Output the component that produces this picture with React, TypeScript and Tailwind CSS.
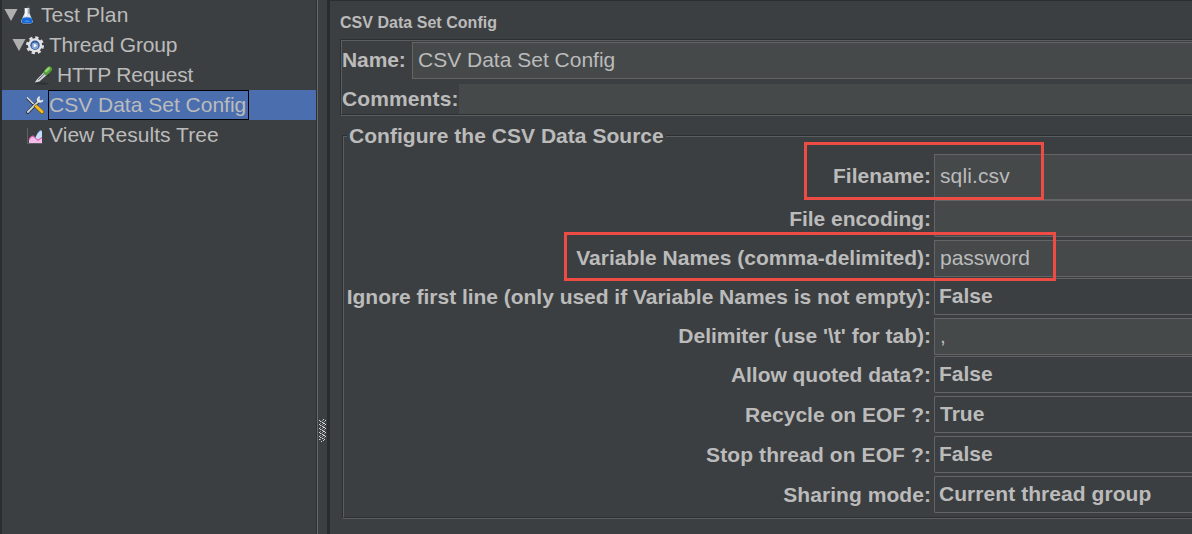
import React from "react";

const FlaskIcon = () => (
  <svg width="14" height="20" viewBox="0 0 14 20">
    <ellipse cx="7" cy="18" rx="6.5" ry="1.6" fill="#25282a" opacity="0.6" />
    <path d="M4.6 3 L4.6 8 L1.2 15.8 Q0.6 18 3 18.4 L11 18.4 Q13.4 18 12.6 15.8 L9.4 8 L9.4 3 Z" fill="#dbe3ea" />
    <path d="M2.6 13 Q7 11.6 11.4 13 L12.5 16 Q13.1 18.1 11 18.3 L3 18.3 Q0.9 18.1 1.5 16 Z" fill="#1668d8" />
    <path d="M4 16.8 Q7 14.4 10 16.8 Z" fill="#4f9cf0" />
    <path d="M6 3.4 L6 11" stroke="#ffffff" strokeWidth="1.4" />
    <path d="M8.4 4 L8.4 9" stroke="#9fabb5" strokeWidth="1" />
    <path d="M7.6 3 L9.4 0.8" stroke="#5e6468" strokeWidth="1.2" />
  </svg>
);

const GearIcon = () => (
  <svg width="18" height="20" viewBox="0 0 18 20">
    <circle cx="9" cy="10.3" r="7.6" fill="none" stroke="#dcdddf" strokeWidth="2.8" strokeDasharray="3.2 2.77" />
    <circle cx="9" cy="10.3" r="7" fill="#e4e4e6" />
    <circle cx="9" cy="10.3" r="4.7" fill="#345796" />
    <circle cx="9" cy="10.8" r="3.4" fill="#86a9dc" />
    <path d="M7.8 8.4 L11 10.5 L7.8 12.6 Z" fill="#ffffff" />
  </svg>
);

const DropperIcon = () => (
  <svg width="20" height="20" viewBox="0 0 20 20">
    <ellipse cx="8" cy="18.6" rx="7" ry="1" fill="#26292b" opacity="0.7" />
    <path d="M0.8 17.6 L2.8 14.4 L10 7 L13 9.8 L5.4 16.4 Z" fill="#d3d6d8" />
    <path d="M4.4 14.8 L10.8 8.4" stroke="#5b6063" strokeWidth="1" />
    <path d="M9.4 5.6 L14.4 10.4" stroke="#26321f" strokeWidth="1.8" strokeLinecap="round" />
    <path d="M12.2 7.4 L15.4 4.2" stroke="#549f3c" strokeWidth="5.4" strokeLinecap="round" />
    <path d="M12 6.2 L14.8 3.4" stroke="#96d474" strokeWidth="2.4" strokeLinecap="round" />
  </svg>
);

const ToolsIcon = () => (
  <svg width="18" height="20" viewBox="0 0 18 20">
    <path d="M1 3 L9.4 11.4" stroke="#202326" strokeWidth="2.4" />
    <path d="M1 2.4 L10 11.4" stroke="#d4d6d8" strokeWidth="1.5" />
    <path d="M1.6 17.4 L12 7" stroke="#272b30" strokeWidth="3.2" strokeLinecap="round" />
    <path d="M1.8 17 L12.2 6.6" stroke="#cfd2d4" strokeWidth="2" strokeLinecap="round" />
    <path d="M12.4 1.6 Q10 4 11 6.6 Q13.8 9.2 17 6.4 L17.4 4.4 L15 5.4 L13.4 4.2 L14.2 1.6 Z" fill="#e2e3e4" />
    <path d="M10.4 11.6 L16 17" stroke="#7c5908" strokeWidth="4" strokeLinecap="round" />
    <path d="M10.4 11.4 L16 16.8" stroke="#f5bd22" strokeWidth="2.8" strokeLinecap="round" />
  </svg>
);

const ChartIcon = () => (
  <svg width="18" height="20" viewBox="0 0 18 20">
    <path d="M1.5 3 V18.5 H16.5" fill="none" stroke="#5d6164" strokeWidth="1" />
    <path d="M8 15 L11.5 8.5 L14 5.4 L16 6 V18 H8 Z" fill="#c4e0f8" />
    <path d="M11.5 8.5 L14 5.6 L15.6 6" fill="none" stroke="#6fa6da" strokeWidth="1" />
    <path d="M3 18 V14.6 L5 12 L7 11 L10 13.6 L12 15.2 L16 12.5 V18 Z" fill="#f3bce9" />
    <path d="M3 14.6 L5 12 L7 11 L10 13.6 L12 15.2 L16 12.5" fill="none" stroke="#dc62ae" strokeWidth="1.1" />
  </svg>
);

const Expander = () => (
  <svg width="14" height="12" viewBox="0 0 14 12">
    <path d="M0.5 0 H13.5 L7 12 Z" fill="#afafaf" />
  </svg>
);

type FieldRow = {
  label: string;
  value: string;
  select?: boolean;
  row: string;
  labelStyle: string;
  valueStyle: string;
};

const fields: FieldRow[] = [
  { label: "Filename:", value: "sqli.csv", row: "h-[46px]", labelStyle: "pt-[10px]", valueStyle: "pt-[9px] tracking-[0.12px]" },
  { label: "File encoding:", value: "", select: true, row: "h-[37px]", labelStyle: "pt-[7px] tracking-[-0.04px]", valueStyle: "pt-[6px]" },
  { label: "Variable Names (comma-delimited):", value: "password", row: "mt-[3px] h-[37px]", labelStyle: "pt-[6px]", valueStyle: "pt-[5px]" },
  { label: "Ignore first line (only used if Variable Names is not empty):", value: "False", select: true, row: "mt-[1px] h-[37px]", labelStyle: "pt-[7px] tracking-[-0.025px]", valueStyle: "pt-[5px] pl-[4px]" },
  { label: "Delimiter (use '\\t' for tab):", value: ",", row: "mt-[3px] h-[37px]", labelStyle: "pt-[6px]", valueStyle: "pt-[5px]" },
  { label: "Allow quoted data?:", value: "False", select: true, row: "mt-[1px] h-[37px]", labelStyle: "pt-[7px] tracking-[-0.03px]", valueStyle: "pt-[5px] pl-[4px]" },
  { label: "Recycle on EOF ?:", value: "True", select: true, row: "mt-[3px] h-[37px]", labelStyle: "pt-[7px] tracking-[0.02px]", valueStyle: "pt-[5px]" },
  { label: "Stop thread on EOF ?:", value: "False", select: true, row: "mt-[3px] h-[37px]", labelStyle: "pt-[7px] tracking-[0.1px]", valueStyle: "pt-[5px] pl-[4px]" },
  { label: "Sharing mode:", value: "Current thread group", select: true, row: "mt-[3px] h-[37px]", labelStyle: "pt-[7px] tracking-[0.06px]", valueStyle: "pt-[5px] pl-[4px] tracking-[0.06px]" },
];

const Tree = () => (
  <nav className="w-[316px] shrink-0 border-l-2 border-[#2b2d2f] text-[21px] leading-[30px]">
    <div className="flex h-[30px] items-center pl-[2px]">
      <Expander />
      <span className="ml-[2px]"><FlaskIcon /></span>
      <span className="ml-[7px] tracking-[0.12px]">Test Plan</span>
    </div>
    <div className="flex h-[30px] items-center pl-[10px]">
      <Expander />
      <span><GearIcon /></span>
      <span className="ml-[5px] tracking-[-0.22px]">Thread Group</span>
    </div>
    <div className="flex h-[30px] items-center pl-[32px]">
      <DropperIcon />
      <span className="ml-[3px] tracking-[-0.2px]">HTTP Request</span>
    </div>
    <div className="flex h-[30px] items-center bg-[#4b6eaf] pl-[24px]">
      <ToolsIcon />
      <span className="ml-[4px] flex h-[30px] w-[201px] items-center border border-black">CSV Data Set Config</span>
    </div>
    <div className="flex h-[30px] items-center pl-[24px]">
      <ChartIcon />
      <span className="ml-[5px] tracking-[0.05px]">View Results Tree</span>
    </div>
  </nav>
);

const gripRows = [0, 4, 8, 12, 16];

const Splitter = () => (
  <div className="flex w-[14px] shrink-0 border-r-[3px] border-l border-l-[#2e3032] border-r-[#292c2e]">
    <div className="flex-1 border-l border-[#686b6d] pt-[419px] pl-px">
      <svg width="8" height="24" viewBox="0 0 8 24" shapeRendering="crispEdges">
        {gripRows.map((y) => (
          <g key={y}>
            <path d={`M0 ${y + 1}h1v1h-1z M1 ${y + 2}h1v1h-1z M4 ${y}h1v1h-1z M6 ${y + 1}h1v1h-1z M3 ${y + 3}h1v1h-1z M5 ${y + 4}h1v1h-1z`} fill="#d6d6d6" />
            <path d={`M2 ${y + 2}h1v1h-1z M3 ${y + 1}h1v1h-1z M5 ${y + 2}h1v1h-1z M1 ${y + 4}h1v1h-1z M4 ${y + 3}h1v1h-1z`} fill="#8d8f90" />
          </g>
        ))}
        <path d="M0 20h1v1h-1z M2 22h1v1h-1z M4 21h1v1h-1z" fill="#d6d6d6" />
      </svg>
    </div>
  </div>
);

export default function App() {
  return (
    <div className="relative flex h-[534px] w-[1192px] overflow-hidden bg-[#3c3f41] font-['Liberation_Sans',Arial,sans-serif] text-[#bbbbbb]">
      <Tree />
      <Splitter />
      <main className="min-w-0 flex-1 border-t border-[#2b2d2f] pl-[10px]">
        <h1 className="h-[38px] pt-[12px] text-[16px] leading-[20px] font-bold tracking-[0.03px]">CSV Data Set Config</h1>
        <section className="h-[77px] border-t border-b border-l border-t-[#2d2f31] border-b-[#5b5e60] border-l-[#2d2f31]">
          <div className="h-full border-t border-b border-l border-t-[#5b5e60] border-b-[#2d2f31] border-l-[#5b5e60] text-[21px]">
            <div className="flex h-[43px] pt-[1px]">
              <label className="w-[70px] pt-[6px] leading-[24px] font-bold tracking-[-0.1px]">Name:</label>
              <div className="h-[37px] flex-1 border-y border-l border-[#646464] bg-[#45494a] pt-[5px] pl-[5px] leading-[24px]">CSV Data Set Config</div>
            </div>
            <div className="flex h-[30px]">
              <label className="w-[117px] pt-[3px] leading-[24px] font-bold tracking-[0.12px]">Comments:</label>
              <div className="h-[30px] flex-1 bg-[#45494a]" />
            </div>
          </div>
        </section>
        <section className="mt-[19px] ml-[2px] h-[384px] border-t border-b border-l border-t-[#2d2f31] border-b-[#5b5e60] border-l-[#2d2f31]">
          <div className="h-full border-t border-b border-l border-t-[#5b5e60] border-b-[#2d2f31] border-l-[#5b5e60] text-[21px]">
            <h2 className="-mt-[13px] ml-[3px] h-[30px] w-[319px] bg-[#3c3f41] pl-[2px] leading-[24px] font-bold tracking-[0.03px]">Configure the CSV Data Source</h2>
            {fields.map((f) => (
              <div key={f.label} className={`flex ${f.row}`}>
                <label className={`flex w-[590px] shrink-0 justify-end pr-[3px] leading-[24px] font-bold whitespace-nowrap ${f.labelStyle}`}>{f.label}</label>
                <div
                  className={`flex-1 border-y border-l border-[#646464] leading-[24px] ${f.valueStyle.includes("pl-") ? "" : "pl-[5px]"} ${f.valueStyle} ${
                    f.value === "" || !f.select ? "bg-[#45494a]" : ""
                  } ${f.select ? "rounded-l-[2px] font-bold" : ""}`}
                >
                  {f.value}
                </div>
              </div>
            ))}
          </div>
        </section>
      </main>
      <div className="absolute top-[142px] left-[804px] h-[58px] w-[240px] border-[3px] border-[#ee4b45]" />
      <div className="absolute top-[232px] left-[564px] h-[49px] w-[492px] border-[3px] border-[#ee4b45]" />
    </div>
  );
}
